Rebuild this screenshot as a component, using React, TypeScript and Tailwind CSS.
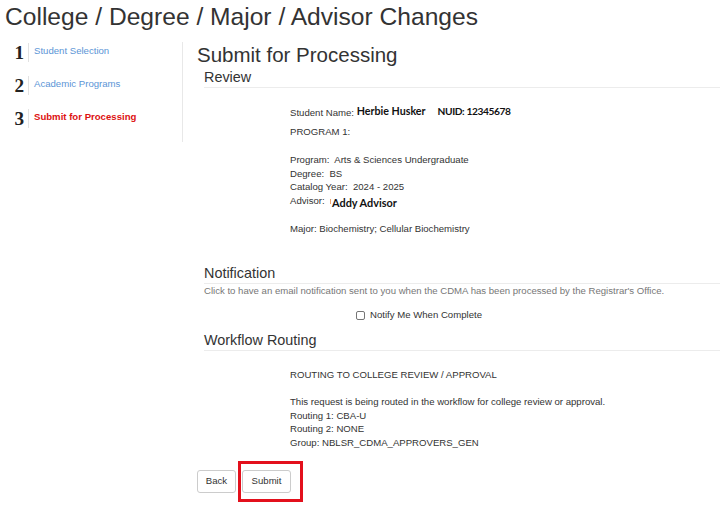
import React from "react";

const body = "font-['Liberation_Sans',Arial,sans-serif]";

function Line({ children, className = "" }: { children?: React.ReactNode; className?: string }) {
  return <div className={`h-[13.7px] leading-[13.7px] whitespace-pre ${className}`}>{children}</div>;
}

function Step({ n, label, active }: { n: string; label: string; active?: boolean }) {
  return (
    <div className="flex items-start h-[19px] mb-[14px]">
      <div className="w-[28px] pr-[4px] text-right font-['Liberation_Serif',serif] font-bold text-[19.2px] leading-[19px] text-[#222]">
        {n}
      </div>
      <div className="w-px h-[19px] bg-[#e2e2e2]" />
      <div
        className={`pl-[5px] pt-[1px] text-[9.6px] leading-[13.7px] ${
          active ? "font-bold text-[#dd1111]" : "text-[#5b95d6]"
        }`}
      >
        {label}
      </div>
    </div>
  );
}

export default function App() {
  return (
    <div className={`w-[720px] h-[517px] bg-white text-[#333] overflow-hidden ${body}`}>
      <div className="h-[42px] pt-[3px] pl-[5px] text-[24.6px] leading-[28px] text-[#333]">
        College / Degree / Major / Advisor Changes
      </div>
      <div className="flex items-start">
        <div className="w-[183px] border-r border-[#e8e8e8] pt-[1px] h-[100px]">
          <Step n="1" label="Student Selection" />
          <Step n="2" label="Academic Programs" />
          <Step n="3" label="Submit for Processing" active />
        </div>
        <div className="flex-1 pl-[14px]">
          <div className="mt-[1px] text-[20.5px] leading-[24px] text-[#333]">Submit for Processing</div>
          <div className="pl-[7px]">
            <div className="pt-[2px] pb-[1px] text-[14.4px] leading-[17px] border-b border-[#ececec]">Review</div>
            <div className="pl-[86px] text-[9.6px]">
              <div className="mt-[16px] h-[14px] leading-[14px] whitespace-pre">
                Student Name:{" "}
                <span className="font-['Lato',sans-serif] font-bold text-[10.7px] text-[#111] align-[1px]">
                  Herbie Husker
                </span>
                <span className="ml-[12px] font-['Lato',sans-serif] font-bold text-[10.2px] tracking-[-0.4px] text-[#111] align-[1px]">
                  NUID: 12345678
                </span>
              </div>
              <Line className="mt-[6.5px]">PROGRAM 1:</Line>
              <div className="h-[14.7px]" />
              <Line>Program:  Arts &amp; Sciences Undergraduate</Line>
              <Line>Degree:  BS</Line>
              <Line>Catalog Year:  2024 - 2025</Line>
              <Line>
                Advisor:{"  "}
                <span className="inline-block w-px h-[5px] bg-[#f2a46b] mr-[1px] align-baseline" />
                <span className="font-['Lato',sans-serif] font-bold text-[10.9px] text-[#111] leading-[13px] align-[-3px]">
                  Addy Advisor
                </span>
              </Line>
              <div className="h-[14.7px]" />
              <Line>Major: Biochemistry; Cellular Biochemistry</Line>
            </div>

            <div className="mt-[28.7px] pb-[1.3px] text-[14.4px] leading-[17px] border-b border-[#ececec]">
              Notification
            </div>
            <Line className="text-[9.6px] text-[#777]">
              Click to have an email notification sent to you when the CDMA has been processed by the Registrar's Office.
            </Line>
            <div className="mt-[10.3px] h-[13.7px] pl-[152px] flex items-center text-[9.6px] leading-[13.7px]">
              <span className="inline-block w-[9px] h-[9px] border border-[#767676] rounded-[2px] bg-white mr-[5px] mt-[1px]" />
              <span>Notify Me When Complete</span>
            </div>

            <div className="mt-[10px] pb-[1.3px] text-[14.4px] leading-[17px] border-b border-[#ececec]">
              Workflow Routing
            </div>
            <div className="pl-[86px] text-[9.6px] mt-[16.7px]">
              <Line>ROUTING TO COLLEGE REVIEW / APPROVAL</Line>
              <Line />
              <Line>This request is being routed in the workflow for college review or approval.</Line>
              <Line>Routing 1: CBA-U</Line>
              <Line>Routing 2: NONE</Line>
              <Line>Group: NBLSR_CDMA_APPROVERS_GEN</Line>
            </div>
          </div>
          <div className="mt-[20.2px] flex items-start gap-[6px]">
            <button className="h-[23px] w-[39px] border border-[#ccc] rounded-[3px] bg-white text-[9.6px] text-[#333]">
              Back
            </button>
            <div className="relative flex">
              <button className="h-[23px] w-[49px] border border-[#ccc] rounded-[3px] bg-white text-[9.6px] text-[#333]">
                Submit
              </button>
              <div className="absolute left-[-4px] right-[-12px] top-[-9px] bottom-[-9px] border-[3px] border-[#e3101c] pointer-events-none" />
            </div>
          </div>
        </div>
      </div>
    </div>
  );
}
